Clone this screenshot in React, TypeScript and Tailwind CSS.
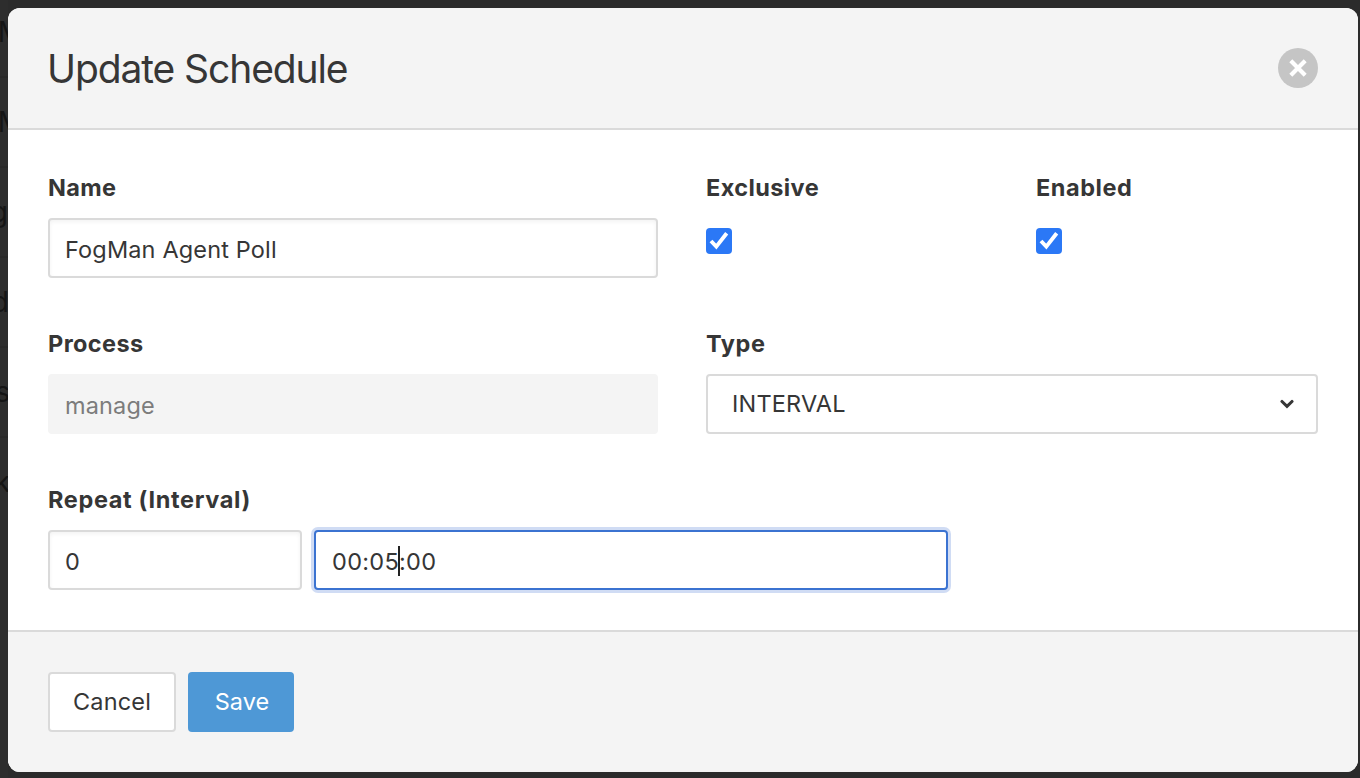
import React from "react";

const backdropRows = [
  { text: "M", shift: "-mr-[15px]", line: true },
  { text: "M", shift: "-mr-[15px]", line: true },
  { text: "g", shift: "mr-0", line: true },
  { text: "d", shift: "-mr-[1px]", line: true },
  { text: "s", shift: "-mr-[2px]", line: true },
  { text: "k", shift: "-mr-[2px]", line: false },
];

function Label({ children, className = "" }: { children: React.ReactNode; className?: string }) {
  return (
    <div className={`h-[30px] whitespace-nowrap text-[23.5px] leading-[30px] font-bold ${className}`}>
      {children}
    </div>
  );
}

function Check({ label, spacing, width }: { label: string; spacing: string; width: string }) {
  return (
    <div className={`shrink-0 ${width}`}>
      <Label className={spacing}>{label}</Label>
      <div
        role="checkbox"
        aria-checked="true"
        aria-label={label}
        className="mt-[25px] size-[26px] rounded-[4px] bg-[#2b78f6]"
      >
        <svg viewBox="0 0 26 26" className="size-[26px]" fill="none">
          <path d="M5 13L10.3 18.6L20.7 5.2" stroke="white" strokeWidth="3.9" />
        </svg>
      </div>
    </div>
  );
}

const fieldBase = "flex h-[60px] items-center rounded-[4px] text-[23.5px] whitespace-nowrap";
const field = "border-2 border-[#dadada] bg-white shadow-[inset_0_2px_4px_rgba(0,0,0,0.05)]";

export default function App() {
  return (
    <div className="flex h-[778px] w-[1360px] overflow-hidden bg-[#2b2b2b] font-['Inter','Liberation_Sans',sans-serif] text-[#363636]">
      <div className="flex h-full w-2 shrink-0 flex-col overflow-hidden bg-[#2d2d2d] text-[28px] text-[#151515]">
        <div className="-mt-[12px]" />
        {backdropRows.map((row, i) => (
          <div
            key={i}
            className={`flex h-[90px] shrink-0 items-center justify-end border-b-2 ${
              row.line ? "border-[#292929]" : "border-transparent"
            }`}
          >
            <span className={row.shift}>{row.text}</span>
          </div>
        ))}
      </div>

      <div className="mt-2 flex h-[764px] w-[1350px] shrink-0 flex-col overflow-hidden rounded-[12px] bg-white">
        <header className="flex h-[122px] shrink-0 items-center justify-between border-b-2 border-[#dadada] bg-[#f4f4f4] px-10">
          <h1 className="-ml-px pt-px text-[39px] leading-[48px] font-normal tracking-[-1.1px] whitespace-nowrap">
            Update Schedule
          </h1>
          <button aria-label="Close" className="size-10 rounded-full bg-[#c5c5c5]">
            <svg viewBox="0 0 40 40" className="size-10" fill="none">
              <path d="M12.8 12.8L27.2 27.2M27.2 12.8L12.8 27.2" stroke="white" strokeWidth="4.2" />
            </svg>
          </button>
        </header>

        <main className="flex h-[500px] shrink-0 flex-col px-10 pt-[43px]">
          <div className="flex h-[156px]">
            <div className="w-[658px] shrink-0">
              <Label className="tracking-[0.3px]">Name</Label>
              <div className={`${fieldBase} ${field} mt-[15px] w-[610px] px-[15px] pt-1 tracking-[0.15px]`}>
                FogMan Agent Poll
              </div>
            </div>
            <Check label="Exclusive" spacing="tracking-[0.4px]" width="w-[330px]" />
            <Check label="Enabled" spacing="tracking-[0.55px]" width="w-[282px]" />
          </div>

          <div className="flex h-[156px]">
            <div className="w-[658px] shrink-0">
              <Label className="tracking-[0.4px]">Process</Label>
              <div className={`${fieldBase} mt-[15px] w-[610px] bg-[#f4f4f4] px-[17px] pt-1 tracking-[0.15px] text-[#7c7c7c]`}>
                manage
              </div>
            </div>
            <div className="w-[612px] shrink-0">
              <Label className="tracking-[0.6px]">Type</Label>
              <div className={`${fieldBase} mt-[15px] w-[612px] justify-between border-2 border-[#dadada] bg-white pr-[22px] pl-6 tracking-[0.2px]`}>
                <span>INTERVAL</span>
                <svg viewBox="0 0 14 10" className="h-[10px] w-[14px]" fill="none">
                  <path d="M2 2.5L7 7.3L12 2.5" stroke="#363636" strokeWidth="3.1" strokeLinecap="round" />
                </svg>
              </div>
            </div>
          </div>

          <div>
            <Label className="tracking-[0.65px]">Repeat (Interval)</Label>
            <div className="mt-[15px] flex gap-3">
              <div className={`${fieldBase} ${field} w-[254px] px-[15px] pt-1`}>0</div>
              <div className={`${fieldBase} w-[634px] border-2 border-[#3b73d1] bg-white px-4 pt-1 tracking-[0.3px] shadow-[0_0_0_3px_#d0dcf4]`}>
                <span>00:05</span>
                <span className="-mx-px -mt-0.5 h-[30px] w-[2px] bg-[#222222]" />
                <span>:00</span>
              </div>
            </div>
          </div>
        </main>

        <footer className="flex grow items-start gap-3 border-t-2 border-[#dadada] bg-[#f4f4f4] px-10 pt-10">
          <button className={`${fieldBase} w-[128px] justify-center border-2 border-[#dadada] bg-white tracking-[0.15px]`}>
            Cancel
          </button>
          <button className={`${fieldBase} w-[106px] justify-center bg-[#4e98d6] pl-0.5 tracking-[0px] text-white`}>
            Save
          </button>
        </footer>
      </div>
    </div>
  );
}
